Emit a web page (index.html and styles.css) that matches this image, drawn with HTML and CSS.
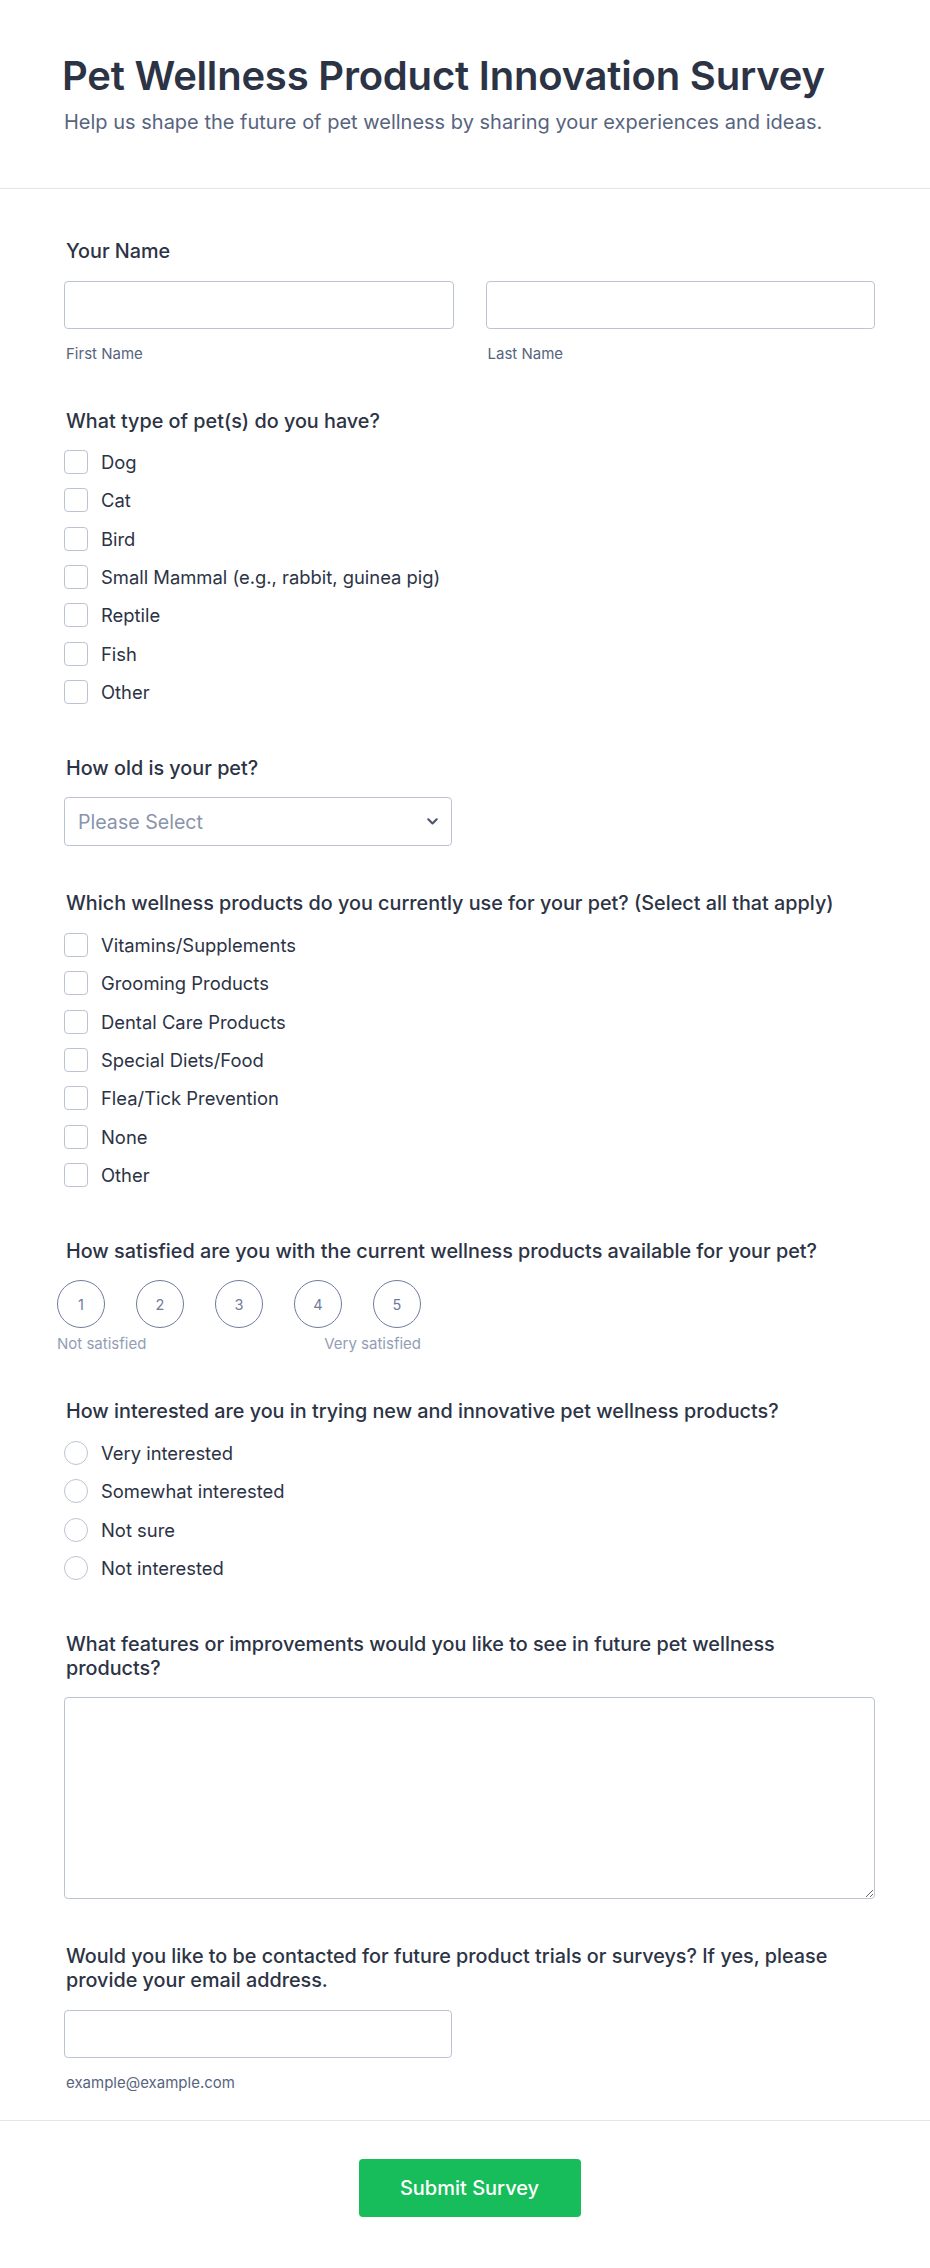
FILE: index.html
```html
<!DOCTYPE html>
<html lang="en">
<head>
<meta charset="utf-8">
<title>Pet Wellness Product Innovation Survey</title>
<link rel="stylesheet" href="styles.css">
</head>
<body>
<header class="header">
  <h1 class="title">Pet Wellness Product Innovation Survey</h1>
  <p class="subtitle">Help us shape the future of pet wellness by sharing your experiences and ideas.</p>
</header>

<form class="form">
  <div class="field">
    <label class="label">Your Name</label>
    <div class="name-row">
      <div class="name-col">
        <input class="input" type="text">
        <span class="sublabel">First Name</span>
      </div>
      <div class="name-col">
        <input class="input" type="text">
        <span class="sublabel">Last Name</span>
      </div>
    </div>
  </div>

  <div class="field">
    <label class="label">What type of pet(s) do you have?</label>
    <div class="options">
      <div class="option"><span class="box"></span><span class="opt-text">Dog</span></div>
      <div class="option"><span class="box"></span><span class="opt-text">Cat</span></div>
      <div class="option"><span class="box"></span><span class="opt-text">Bird</span></div>
      <div class="option"><span class="box"></span><span class="opt-text">Small Mammal (e.g., rabbit, guinea pig)</span></div>
      <div class="option"><span class="box"></span><span class="opt-text">Reptile</span></div>
      <div class="option"><span class="box"></span><span class="opt-text">Fish</span></div>
      <div class="option"><span class="box"></span><span class="opt-text">Other</span></div>
    </div>
  </div>

  <div class="field">
    <label class="label">How old is your pet?</label>
    <div class="select">
      <span class="placeholder">Please Select</span>
      <svg class="chevron" width="11" height="7" viewBox="0 0 11 7"><path d="M1.3 1.3 L5.5 5.4 L9.7 1.3" fill="none" stroke="#4a5470" stroke-width="2.1" stroke-linecap="round" stroke-linejoin="round"/></svg>
    </div>
  </div>

  <div class="field">
    <label class="label">Which wellness products do you currently use for your pet? (Select all that apply)</label>
    <div class="options">
      <div class="option"><span class="box"></span><span class="opt-text">Vitamins/Supplements</span></div>
      <div class="option"><span class="box"></span><span class="opt-text">Grooming Products</span></div>
      <div class="option"><span class="box"></span><span class="opt-text">Dental Care Products</span></div>
      <div class="option"><span class="box"></span><span class="opt-text">Special Diets/Food</span></div>
      <div class="option"><span class="box"></span><span class="opt-text">Flea/Tick Prevention</span></div>
      <div class="option"><span class="box"></span><span class="opt-text">None</span></div>
      <div class="option"><span class="box"></span><span class="opt-text">Other</span></div>
    </div>
  </div>

  <div class="field">
    <label class="label">How satisfied are you with the current wellness products available for your pet?</label>
    <div class="rating">
      <div class="circles">
        <span class="circle">1</span>
        <span class="circle">2</span>
        <span class="circle">3</span>
        <span class="circle">4</span>
        <span class="circle">5</span>
      </div>
      <div class="scale-labels">
        <span>Not satisfied</span>
        <span>Very satisfied</span>
      </div>
    </div>
  </div>

  <div class="field">
    <label class="label">How interested are you in trying new and innovative pet wellness products?</label>
    <div class="options">
      <div class="option"><span class="box round"></span><span class="opt-text">Very interested</span></div>
      <div class="option"><span class="box round"></span><span class="opt-text">Somewhat interested</span></div>
      <div class="option"><span class="box round"></span><span class="opt-text">Not sure</span></div>
      <div class="option"><span class="box round"></span><span class="opt-text">Not interested</span></div>
    </div>
  </div>

  <div class="field">
    <label class="label">What features or improvements would you like to see in future pet wellness products?</label>
    <textarea class="textarea"></textarea>
  </div>

  <div class="field">
    <label class="label">Would you like to be contacted for future product trials or surveys? If yes, please provide your email address.</label>
    <input class="input short" type="email">
    <span class="sublabel">example@example.com</span>
  </div>
</form>

<footer class="footer">
  <button class="submit" type="button">Submit Survey</button>
</footer>
</body>
</html>
```

FILE: styles.css
```css
* { box-sizing: border-box; }

html, body {
  margin: 0;
  padding: 0;
  background: #ffffff;
}

body {
  font-family: Inter, "Noto Sans", "Liberation Sans", sans-serif;
  color: #2c3345;
}

.header {
  padding: 52px 55px 51px 62px;
  border-bottom: 1px solid #e3e5ee;
}

.title {
  margin: 0;
  font-size: 40px;
  line-height: 48px;
  font-weight: 600;
  letter-spacing: -0.2px;
  color: #2c3345;
}

.subtitle {
  margin: 7px 0 0 2px;
  font-size: 20px;
  line-height: 30px;
  font-weight: 400;
  color: #57647e;
}

.form {
  padding: 50px 55px 27px 64px;
  display: flex;
  flex-direction: column;
  gap: 45px;
}

.field {
  display: flex;
  flex-direction: column;
  align-items: flex-start;
}

.label {
  display: block;
  padding-left: 2px;
  margin-bottom: 17.5px;
  font-size: 19.8px;
  line-height: 24px;
  font-weight: 500;
  color: #2c3345;
  max-width: 790px;
}

.name-row {
  display: flex;
  gap: 32px;
  width: 100%;
}

.name-col {
  flex: 1;
  display: flex;
  flex-direction: column;
}

.input {
  display: block;
  width: 100%;
  height: 48px;
  border: 1px solid #bcc3d2;
  border-radius: 4px;
  background: #fff;
  font: inherit;
  margin: 0;
}

.input.short {
  width: 388px;
}

.sublabel {
  display: block;
  margin-top: 15px;
  padding-left: 2px;
  font-size: 15px;
  line-height: 20px;
  color: #57647e;
}

.options {
  display: flex;
  flex-direction: column;
  gap: 14.33px;
  padding-bottom: 7px;
}

.option {
  display: flex;
  align-items: center;
  gap: 13px;
  height: 24px;
}

.box {
  width: 24px;
  height: 24px;
  flex: none;
  border: 1px solid #bcc3d2;
  border-radius: 4px;
  background: #fff;
}

.box.round {
  border-radius: 50%;
}

.opt-text {
  font-size: 18.4px;
  line-height: 24px;
  color: #2c3345;
}

.select {
  display: flex;
  align-items: center;
  justify-content: space-between;
  width: 388px;
  height: 49px;
  padding: 0 13px 0 13px;
  border: 1px solid #bcc3d2;
  border-radius: 4px;
  background: #fff;
}

.placeholder {
  font-size: 19.6px;
  color: #8894ab;
}

.chevron {
  display: block;
}

.rating {
  margin-left: -7px;
  display: flex;
  flex-direction: column;
  width: 364px;
}

.circles {
  display: flex;
  justify-content: space-between;
}

.circle {
  width: 48px;
  height: 48px;
  border: 1px solid #6f7c9c;
  border-radius: 50%;
  display: flex;
  align-items: center;
  justify-content: center;
  font-size: 14.5px;
  color: #6f7c9c;
}

.scale-labels {
  display: flex;
  justify-content: space-between;
  margin-top: 6px;
  font-size: 15px;
  line-height: 20px;
  color: #939eb6;
}

.textarea {
  display: block;
  width: 100%;
  height: 202px;
  border: 1px solid #bcc3d2;
  border-radius: 4px;
  background: #fff;
  font: inherit;
  margin: 0;
}

.footer {
  border-top: 1px solid #e3e5ee;
  padding: 38px 55px 50px 64px;
  display: flex;
  justify-content: center;
}

.submit {
  width: 222px;
  height: 58px;
  border: none;
  border-radius: 4px;
  background: #18bd5b;
  color: #ffffff;
  font-family: Inter, "Noto Sans", sans-serif;
  font-size: 20px;
  font-weight: 500;
}
```
